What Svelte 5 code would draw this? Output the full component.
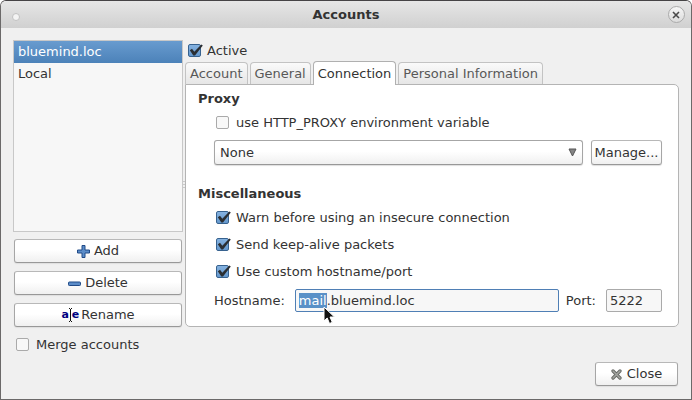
<script>
  import { onMount } from 'svelte';

  const tabs = ['Account', 'General', 'Connection', 'Personal Information'];
  const accounts = ['bluemind.loc', 'Local'];
  let activeTab = $state('Connection');
  let selected = $state('bluemind.loc');
  let active = $state(true);
  let merge = $state(false);
  let httpProxy = $state(false);
  let warn = $state(true);
  let keepAlive = $state(true);
  let custom = $state(true);
  let hostname = $state('mail.bluemind.loc');
  let port = $state('5222');
  let hostInput;

  onMount(() => {
    hostInput.focus();
    hostInput.setSelectionRange(0, 4);
  });
</script>

{#snippet check(on)}
  <svg class="mark" viewBox="0 0 18 16" aria-hidden="true">
    {#if on}<path d="M2.800 7.200 5 5.700 7.300 8.800 14.300 1.500 15.800 2.600 8 12.600H6.300z" fill="#2b2f33" />{/if}
  </svg>
{/snippet}

<div class="window">
  <header>
    <span class="dot"></span>
    <h1>Accounts</h1>
    <button class="x" aria-label="Close window">
      <svg width="8" height="8" viewBox="0 0 8 8"><path d="M1 1 7 7M7 1 1 7" stroke="#4a4a4a" stroke-width="1.6" /></svg>
    </button>
  </header>

  <main>
    <aside>
      <div class="list" role="listbox" aria-label="Accounts">
        {#each accounts as name}
          <button class="item" role="option" aria-selected={selected === name} onclick={() => (selected = name)}>{name}</button>
        {/each}
      </div>
      <div class="actions">
        <button class="btn">
          <svg width="13" height="13" viewBox="0 0 13 13"><path d="M5 .5h3v4.500h4.500v3H8v4.500H5V8H.5V5H5z" fill="#5b8cc8" stroke="#204a87" stroke-linejoin="round" /></svg>
          Add
        </button>
        <button class="btn">
          <svg width="13" height="13" viewBox="0 0 13 13"><rect x=".5" y="5" width="12" height="3.500" rx=".8" fill="#5b8cc8" stroke="#204a87" /></svg>
          Delete
        </button>
        <button class="btn rename">
          <span class="ae" aria-hidden="true"><b>a</b><svg width="3" height="14" viewBox="1 0 3 14"><path d="M0 .5H2M3 .5H5M2.500 1V13M0 13.500H2M3 13.500H5" stroke="#111" fill="none" /></svg><b>e</b></span>
          Rename
        </button>
      </div>
      <label class="check merge"><span class="box"><input type="checkbox" bind:checked={merge} />{@render check(merge)}</span>Merge accounts</label>
    </aside>

    <div class="grip" aria-hidden="true"><i></i><i></i><i></i></div>

    <section class="detail">
      <label class="check act"><span class="box"><input type="checkbox" bind:checked={active} />{@render check(active)}</span>Active</label>
      <div class="tabs" role="tablist">
        {#each tabs as tab}
          <button class="tab" role="tab" aria-selected={activeTab === tab} onclick={() => (activeTab = tab)}>{tab}</button>
        {/each}
      </div>
      <div class="panel" role="tabpanel">
        <h2>Proxy</h2>
        <div class="group">
          <label class="check"><span class="box"><input type="checkbox" bind:checked={httpProxy} />{@render check(httpProxy)}</span>use HTTP_PROXY environment variable</label>
          <div class="row">
            <div class="combo">
              <select aria-label="Proxy"><option>None</option></select>
              <svg class="arrow" width="9" height="9" viewBox="0 0 9 9"><path d="M1 1H8L4.500 8z" fill="#858585" stroke="#555" /></svg>
            </div>
            <button class="btn manage">Manage...</button>
          </div>
        </div>
        <h2 class="misc">Miscellaneous</h2>
        <div class="group">
          <label class="check"><span class="box"><input type="checkbox" bind:checked={warn} />{@render check(warn)}</span>Warn before using an insecure connection</label>
          <label class="check"><span class="box"><input type="checkbox" bind:checked={keepAlive} />{@render check(keepAlive)}</span>Send keep-alive packets</label>
          <label class="check"><span class="box"><input type="checkbox" bind:checked={custom} />{@render check(custom)}</span>Use custom hostname/port</label>
          <div class="fields">
            <label for="host">Hostname:</label>
            <div class="host">
              <input id="host" class="text" bind:this={hostInput} bind:value={hostname} />
              <svg class="pointer" width="13" height="19" viewBox="0 0 13 19" aria-hidden="true"><path d="M1 1V15L4.200 12 6.500 17.500 9.300 16.300 7 11H11.500z" fill="#111" stroke="#fff" /></svg>
            </div>
            <label class="portlabel" for="port">Port:</label>
            <input id="port" class="text port" bind:value={port} />
          </div>
        </div>
      </div>
    </section>
  </main>

  <footer>
    <button class="btn close">
      <svg width="11" height="11" viewBox="0 0 12 12"><path d="M2.200 2.200 9.800 9.800M9.800 2.200 2.200 9.800" stroke="#666864" stroke-width="3.600" stroke-linecap="round" /><path d="M2.200 2.200 9.800 9.800M9.800 2.200 2.200 9.800" stroke="#a3a5a0" stroke-width="1.600" stroke-linecap="round" /></svg>
      Close
    </button>
  </footer>
</div>

<style>
  :global(body) { background: #fff; }
  .window, button, input, select { font: 13px/16px "DejaVu Sans", sans-serif; color: #333; }
  .window, .window * { box-sizing: border-box; }
  .window {
    display: flex; flex-direction: column; min-height: 100vh;
    background: #f0f0f0; border: 1px solid #6b6969; border-top-color: #454345;
    border-radius: 6px 6px 0 0; overflow: hidden;
  }
  button { margin: 0; padding: 0; }
  h1, h2 { margin: 0; font-size: 13px; line-height: 16px; font-weight: bold; color: #333; }
  header {
    display: grid; grid-template-columns: 20px 1fr 20px; align-items: center;
    height: 27px; padding: 0 5px; background: linear-gradient(#e6e6e6, #d0d0d0);
  }
  h1 { text-align: center; }
  .dot { justify-self: end; margin: 4px 6px 0 0; width: 8px; height: 8px; border: 1px solid #c2c2c2; border-radius: 50%; background: #f4f4f4; }
  .x {
    display: grid; place-items: center; width: 17px; height: 17px; justify-self: center;
    border: 1px solid #aaa; border-radius: 50%; background: linear-gradient(#f6f6f6, #dcdcdc);
  }
  main { display: grid; grid-template-columns: 170px 2px 1fr; padding: 12px 12px 0; }
  .list { height: 192px; border: 1px solid #c8c8c8; background: #f7f7f7; }
  .item { display: block; width: 100%; height: 22px; padding: 0 4px; border: 0; background: none; text-align: left; }
  .item[aria-selected='true'] { color: #fff; background: linear-gradient(#689bcf, #4c82b9); }
  .actions { display: grid; gap: 8px; padding: 7px 1px 0; }
  .btn {
    display: flex; align-items: center; justify-content: center; gap: 4px; height: 24px;
    border: 1px solid #a6a6a6; border-top-color: #b8b8b8; border-bottom-color: #989898; border-radius: 3px;
    background: linear-gradient(#fff 45%, #f0f0f0); box-shadow: 0 1px 1px #dedede;
  }
  .ae { display: flex; align-items: center; color: #000080; font-size: 11px; }
  .rename { gap: 2px; }
  .check { display: flex; align-items: center; gap: 7px; height: 27px; }
  .box { position: relative; display: block; width: 13px; height: 13px; }
  .box input {
    appearance: none; display: block; margin: 0; width: 13px; height: 13px;
    border: 1px solid #aaa; border-radius: 2px; background: #f8f8f8;
  }
  .box input:checked { border-color: #37628f; background: linear-gradient(#85b2e0, #6598cd); }
  .mark { position: absolute; left: -1px; top: -1px; width: 18px; height: 16px; pointer-events: none; }
  .merge { padding-left: 3px; margin-top: 4px; }
  .grip { display: grid; gap: 2px; align-self: start; margin-top: 141px; }
  .grip i { height: 1px; background: #c9c9c9; }
  .act { height: 21px; padding-left: 3px; gap: 6px; }
  .tabs { display: flex; align-items: flex-end; gap: 2px; height: 23px; }
  .tab {
    height: 22px; padding: 0 4px; border: 1px solid #c3c3c3; border-bottom: 0; border-radius: 4px 4px 0 0;
    color: #585858; background: linear-gradient(#fafafa, #e6e6e6);
  }
  .tab[aria-selected='true'] { position: relative; height: 24px; margin-bottom: -1px; border-color: #b0b0b0; color: #333; background: #fff; }
  .panel { padding: 6px 16px 14px 12px; border: 1px solid #b4b4b4; border-radius: 0 5px 5px 5px; background: #fff; }
  .group { padding-left: 16px; }
  .group .check { padding-left: 2px; }
  .panel h2 + .group { padding-top: 2px; }
  .row { display: flex; gap: 8px; margin-top: 4px; }
  .combo { position: relative; flex: 1; }
  select {
    appearance: none; display: block; width: 100%; height: 25px; padding: 0 5px;
    border: 1px solid #a6a6a6; border-bottom-color: #989898; border-radius: 3px;
    background: linear-gradient(#fff 45%, #f0f0f0); box-shadow: 0 1px 1px #dedede;
  }
  .arrow { position: absolute; right: 6px; top: 8px; pointer-events: none; }
  .manage { width: 71px; height: 25px; }
  .misc { margin-top: 21px; }
  .fields { display: flex; align-items: center; margin-top: 4px; }
  .host { position: relative; flex: 1; margin-left: 10px; }
  .text { display: block; width: 100%; height: 23px; padding: 0 3px; border: 1px solid #aaa; border-radius: 2px; background: #f7f7f7; outline: 0; }
  #host { border-color: #4f7fb5; }
  .text::selection { color: #fff; background: #5990c7; }
  .portlabel { margin: 0 10px 0 7px; }
  .port { width: 56px; }
  .pointer { position: absolute; left: 28px; top: 17px; pointer-events: none; }
  footer { display: flex; justify-content: flex-end; margin-top: auto; padding: 0 13px 13px; }
  .close { width: 83px; gap: 5px; }
</style>
